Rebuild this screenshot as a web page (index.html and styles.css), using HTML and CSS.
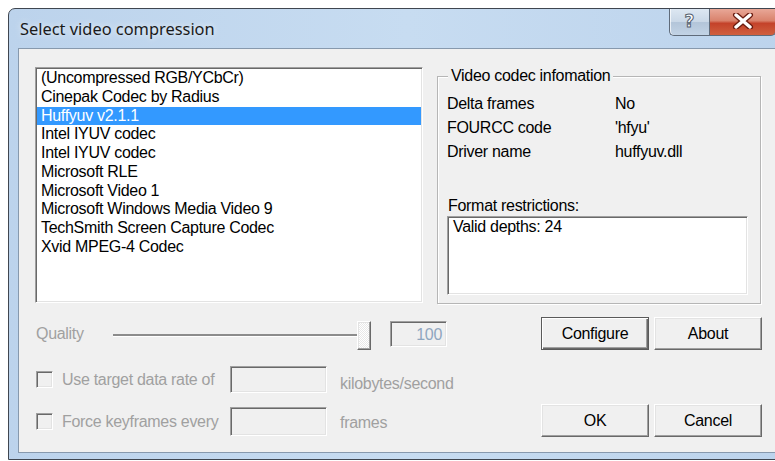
FILE: index.html
```html
<!DOCTYPE html>
<html>
<head>
<meta charset="utf-8">
<title>Select video compression</title>
<link rel="stylesheet" href="styles.css">
</head>
<body>
<div class="window">
  <div class="titlebar">
    <span class="title">Select video compression</span>
    <div class="caption-buttons">
      <div class="cap-btn help"><span>?</span></div>
      <div class="cap-btn close">
        <svg width="22" height="16" viewBox="0 0 22 16">
          <path d="M4 2 L18 14 M18 2 L4 14" stroke="#6b1c10" stroke-width="6" stroke-linecap="round" fill="none"/>
          <path d="M4 2 L18 14 M18 2 L4 14" stroke="#ffffff" stroke-width="3.4" stroke-linecap="round" fill="none"/>
        </svg>
      </div>
    </div>
  </div>
  <div class="client">
    <div class="top-row">
      <div class="listbox sunken">
        <div class="item">(Uncompressed RGB/YCbCr)</div>
        <div class="item">Cinepak Codec by Radius</div>
        <div class="item selected">Huffyuv v2.1.1</div>
        <div class="item">Intel IYUV codec</div>
        <div class="item">Intel IYUV codec</div>
        <div class="item">Microsoft RLE</div>
        <div class="item">Microsoft Video 1</div>
        <div class="item">Microsoft Windows Media Video 9</div>
        <div class="item">TechSmith Screen Capture Codec</div>
        <div class="item">Xvid MPEG-4 Codec</div>
      </div>
      <div class="group">
        <div class="legend">Video codec infomation</div>
        <div class="info-rows">
          <div class="info-row"><span class="key">Delta frames</span><span>No</span></div>
          <div class="info-row"><span class="key">FOURCC code</span><span>'hfyu'</span></div>
          <div class="info-row"><span class="key">Driver name</span><span>huffyuv.dll</span></div>
        </div>
        <div class="restrict-label">Format restrictions:</div>
        <div class="restrict-box sunken">Valid depths: 24</div>
      </div>
    </div>
    <div class="bottom-row">
      <div class="options">
        <div class="quality-row">
          <span class="quality-label disabled">Quality</span>
          <div class="slider">
            <div class="track"></div>
            <div class="thumb"></div>
          </div>
          <div class="edit sunken quality-value">100</div>
        </div>
        <div class="check-row first">
          <div class="check-label">
            <span class="checkbox"></span>
            <span class="disabled">Use target data rate of</span>
          </div>
          <div class="edit sunken wide"></div>
          <span class="unit disabled">kilobytes/second</span>
        </div>
        <div class="check-row second">
          <div class="check-label">
            <span class="checkbox"></span>
            <span class="disabled">Force keyframes every</span>
          </div>
          <div class="edit sunken wide"></div>
          <span class="unit disabled">frames</span>
        </div>
      </div>
      <div class="buttons">
        <div class="btn default">Configure</div>
        <div class="btn">About</div>
        <div class="btn">OK</div>
        <div class="btn">Cancel</div>
      </div>
    </div>
  </div>
</div>
</body>
</html>
```
FILE: styles.css
```css
html, body {
  margin: 0;
  padding: 0;
  background: #ffffff;
  overflow: hidden;
}

body {
  width: 775px;
  height: 461px;
  font-family: "Liberation Sans", Arial, sans-serif;
  font-size: 16px;
  letter-spacing: -0.3px;
  color: #000;
}

/* window frame (Windows 7 basic style) */
.window {
  margin: 8px 0 0 8px;
  width: 800px;
  height: 452px;
  box-sizing: border-box;
  border: 1px solid #3f4650;
  border-radius: 7px 7px 0 0;
  background: linear-gradient(90deg, #bcd3ec 0%, #c7dcf1 50%, #bcd3ec 100%);
  padding: 0 0 6px 9px;
  display: flex;
  flex-direction: column;
}

.titlebar {
  height: 39px;
  display: flex;
  align-items: flex-start;
}

.title {
  font-family: "Noto Sans", "Open Sans", sans-serif;
  font-size: 16.4px;
  letter-spacing: 0;
  color: #1a1a1a;
  margin: 8px 0 0 2px;
  line-height: 24px;
  text-shadow: 0 0 6px rgba(255, 255, 255, 0.9);
}

.caption-buttons {
  margin-left: auto;
  margin-right: 31px;
  display: flex;
  height: 27px;
}

.cap-btn {
  height: 27px;
  display: flex;
  align-items: center;
  justify-content: center;
  box-sizing: border-box;
  border: 1px solid #5f6b7a;
  border-top: none;
}

.help {
  width: 40px;
  border-radius: 0 0 0 5px;
  border-right: none;
  background: linear-gradient(180deg, #dde7f2 0%, #cad8e7 48%, #b3c5d9 52%, #c2d3e5 100%);
  box-shadow: inset 1px 0 rgba(255, 255, 255, 0.7);
}

.help span {
  font-family: "DejaVu Sans", sans-serif;
  font-weight: bold;
  font-size: 17px;
  letter-spacing: 0;
  color: #ffffff;
  -webkit-text-stroke: 1px #55606e;
  margin-top: -2px;
}

.close {
  width: 67px;
  border-radius: 0 0 5px 0;
  background: linear-gradient(180deg, #e8a797 0%, #d9826c 45%, #c4422a 55%, #d0603f 100%);
}

.close svg {
  margin-top: -2px;
}

/* client area */
.client {
  flex: 1;
  background: #f0f0f0;
  border: 1px solid #8799ad;
  display: flex;
  flex-direction: column;
}

.sunken {
  box-sizing: border-box;
  border-style: solid;
  border-width: 1px;
  border-color: #a0a0a0 #ffffff #ffffff #a0a0a0;
  box-shadow: inset 1px 1px #696969, inset -1px -1px #e3e3e3;
}

.top-row {
  display: flex;
  margin: 18px 0 0 16px;
  align-items: flex-start;
}

.listbox {
  width: 388px;
  height: 236px;
  background: #fff;
  padding: 1px;
}

.item {
  height: 18.75px;
  line-height: 18.75px;
  padding-left: 4px;
  white-space: nowrap;
}

.item.selected {
  background: #3399ff;
  color: #fff;
}

.group {
  margin: 9px 0 0 14px;
  width: 324px;
  height: 228px;
  box-sizing: border-box;
  border: 1px solid #b6b6b6;
  box-shadow: inset 1px 1px #ffffff, 1px 1px #ffffff;
  padding-left: 9px;
}

.legend {
  width: fit-content;
  margin: -10px 0 0 1px;
  padding: 0 3px;
  line-height: 18px;
  background: #f0f0f0;
}

.info-rows {
  margin-top: 7px;
}

.info-row {
  display: flex;
  line-height: 24px;
}

.key {
  width: 168px;
}

.restrict-label {
  margin-top: 33px;
  line-height: 18px;
  padding-left: 1px;
}

.restrict-box {
  margin-top: 1px;
  width: 301px;
  height: 79px;
  background: #fff;
  padding: 1px 0 0 5px;
  line-height: 18px;
}

/* bottom controls */
.bottom-row {
  display: flex;
  align-items: flex-start;
  margin: 13px 0 0 16px;
}

.options {
  width: 412px;
  flex-shrink: 0;
  padding-top: 4px;
}

.disabled {
  color: #a0a0a0;
}

.quality-row {
  display: flex;
  align-items: flex-start;
  height: 29px;
}

.quality-label {
  width: 77px;
  flex-shrink: 0;
  padding-left: 1px;
  line-height: 26px;
}

.slider {
  width: 258px;
  flex-shrink: 0;
  height: 29px;
  display: flex;
  align-items: center;
}

.track {
  width: 244px;
  height: 3px;
  box-sizing: border-box;
  border-top: 2px solid #8c8c8c;
  border-bottom: 1px solid #ffffff;
}

.thumb {
  width: 14px;
  height: 29px;
  box-sizing: border-box;
  border-style: solid;
  border-width: 1px;
  border-color: #ffffff #696969 #696969 #ffffff;
  box-shadow: inset -1px -1px #a0a0a0, inset 1px 1px #e3e3e3;
  background-color: #f0f0f0;
  background-image: repeating-conic-gradient(#ffffff 0 25%, #e8e8e8 0 50%);
  background-size: 2px 2px;
}

.edit {
  background: #f0f0f0;
  flex-shrink: 0;
}

.quality-value {
  margin-left: 19px;
  width: 57px;
  height: 26px;
  text-align: right;
  padding-right: 4px;
  line-height: 25px;
  color: #8fa6bf;
}

.check-row {
  display: flex;
  align-items: center;
  white-space: nowrap;
}

.check-row.first {
  margin-top: 16px;
}

.check-row.second {
  margin-top: 14px;
}

.check-label {
  width: 195px;
  flex-shrink: 0;
  display: flex;
  align-items: center;
}

.checkbox {
  width: 17px;
  height: 17px;
  flex-shrink: 0;
  margin-left: 1px;
  margin-right: 9px;
  box-sizing: border-box;
  border-style: solid;
  border-width: 1px;
  border-color: #a0a0a0 #ffffff #ffffff #a0a0a0;
  box-shadow: inset 1px 1px #696969, inset -1px -1px #e3e3e3;
  background: #f0f0f0;
}

.edit.wide {
  width: 97px;
  height: 27px;
}

.second .edit.wide {
  height: 29px;
}

.unit {
  margin-left: 13px;
  position: relative;
  top: 4px;
}

.second .unit {
  top: 1px;
}

.buttons {
  margin-left: 94px;
  flex-shrink: 0;
  display: grid;
  grid-template-columns: 108px 108px;
  grid-template-rows: 33px 33px;
  column-gap: 5px;
  row-gap: 54px;
}

.btn {
  box-sizing: border-box;
  display: flex;
  align-items: center;
  justify-content: center;
  background: #f0f0f0;
  border-style: solid;
  border-width: 1px;
  border-color: #ffffff #696969 #696969 #ffffff;
  box-shadow: inset -1px -1px #a0a0a0, inset 1px 1px #e3e3e3;
}

.btn.default {
  border: 1px solid #5a5a5a;
  box-shadow: inset 1px 1px #ffffff, inset -1px -1px #696969, inset -2px -2px #a0a0a0;
}
```
